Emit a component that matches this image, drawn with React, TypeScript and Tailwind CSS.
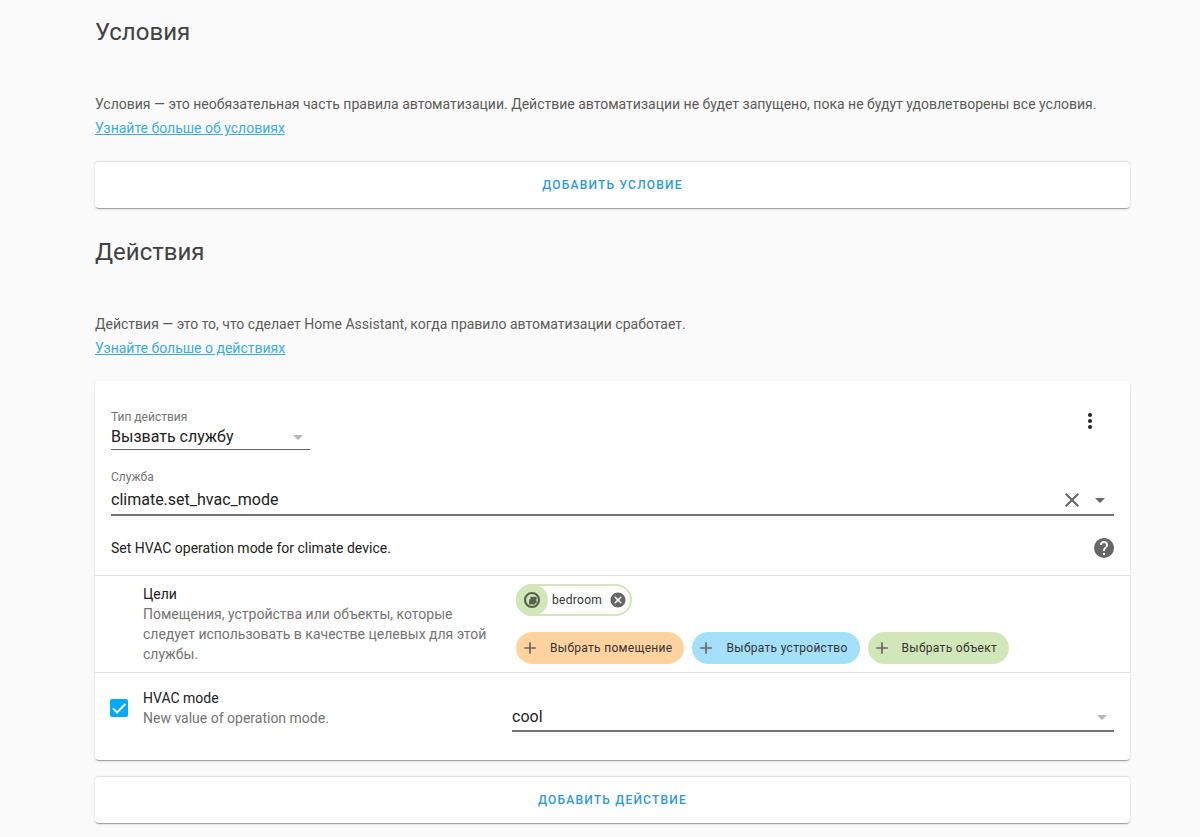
import { useState } from 'react';
import type { ReactNode } from 'react';

function Icon({ path, className }: { path: string; className?: string }) {
  return (
    <svg viewBox="0 0 24 24" fill="currentColor" aria-hidden="true" className={className}>
      <path d={path} />
    </svg>
  );
}

const icons = {
  menuDown: 'M7,10L12,15L17,10H7Z',
  dotsVertical:
    'M12,16A2,2 0 0,1 14,18A2,2 0 0,1 12,20A2,2 0 0,1 10,18A2,2 0 0,1 12,16M12,10A2,2 0 0,1 14,12A2,2 0 0,1 12,14A2,2 0 0,1 10,12A2,2 0 0,1 12,10M12,4A2,2 0 0,1 14,6A2,2 0 0,1 12,8A2,2 0 0,1 10,6A2,2 0 0,1 12,4Z',
  close:
    'M19,6.41L17.59,5L12,10.59L6.41,5L5,6.41L10.59,12L5,17.59L6.41,19L12,13.41L17.59,19L19,17.59L13.41,12L19,6.41Z',
  closeCircle:
    'M12,2C17.53,2 22,6.47 22,12C22,17.53 17.53,22 12,22C6.47,22 2,17.53 2,12C2,6.47 6.47,2 12,2M15.59,7L12,10.59L8.41,7L7,8.41L10.59,12L7,15.59L8.41,17L12,13.41L15.59,17L17,15.59L13.41,12L17,8.41L15.59,7Z',
  helpCircle:
    'M15.07,11.25L14.17,12.17C13.45,12.89 13,13.5 13,15H11V14.5C11,13.39 11.45,12.39 12.17,11.67L13.41,10.41C13.78,10.05 14,9.55 14,9C14,7.89 13.1,7 12,7A2,2 0 0,0 10,9H8A4,4 0 0,1 12,5A4,4 0 0,1 16,9C16,9.88 15.64,10.67 15.07,11.25M13,19H11V17H13M12,2A10,10 0 0,0 2,12A10,10 0 0,0 12,22A10,10 0 0,0 22,12C22,6.47 17.5,2 12,2Z',
  plus: 'M19,13H13V19H11V13H5V11H11V5H13V11H19V13Z',
};

const cardStyle =
  'rounded-sm bg-white shadow-[0_2px_1px_-1px_rgba(0,0,0,0.2),0_1px_1px_0_rgba(0,0,0,0.14),0_1px_3px_0_rgba(0,0,0,0.12)]';

interface SectionProps {
  title: string;
  text: string;
  linkText: string;
  children: ReactNode;
}

function Section({ title, text, linkText, children }: SectionProps) {
  return (
    <section>
      <h2 className="text-2xl leading-8 text-[#414141]">{title}</h2>
      <div className="mt-11 mb-[21px] text-sm leading-6 text-[#5a5a5a]">
        <p>{text}</p>
        <a href="#" className="text-[#39addf] underline">
          {linkText}
        </a>
      </div>
      {children}
    </section>
  );
}

function AddButton({ label }: { label: string }) {
  return (
    <button
      type="button"
      className={`h-[47px] w-full border-t border-[#e0e0e0] text-xs font-medium tracking-widest text-[#2b9bd6] uppercase ${cardStyle}`}
    >
      {label}
    </button>
  );
}

function TargetButton({ label, color }: { label: string; color: string }) {
  return (
    <button
      type="button"
      className={`flex h-8 items-center rounded-full pr-3 pl-1 text-xs tracking-wide text-[#333] ${color}`}
    >
      <Icon path={icons.plus} className="mr-2.5 size-5 text-[#666]" />
      {label}
    </button>
  );
}

export default function App() {
  const [service, setService] = useState('climate.set_hvac_mode');
  const [enabled, setEnabled] = useState(true);

  return (
    <main className="min-h-screen bg-[#fafafa] pt-4 pr-[70px] pb-3 pl-[95px] font-[Roboto,sans-serif]">
      <div className="flex flex-col gap-7">
        <Section
          title="Условия"
          text="Условия — это необязательная часть правила автоматизации. Действие автоматизации не будет запущено, пока не будут удовлетворены все условия."
          linkText="Узнайте больше об условиях"
        >
          <AddButton label="Добавить условие" />
        </Section>

        <Section
          title="Действия"
          text="Действия — это то, что сделает Home Assistant, когда правило автоматизации сработает."
          linkText="Узнайте больше о действиях"
        >
          <div className={cardStyle}>
            <div className="px-4 pt-7">
              <div className="flex items-start justify-between">
                <div className="w-[199px]">
                  <label htmlFor="action-type" className="block text-xs leading-4 text-[#737373]">
                    Тип действия
                  </label>
                  <div className="grid items-center border-b border-[#616161]">
                    <select
                      id="action-type"
                      className="col-start-1 row-start-1 h-6 appearance-none bg-transparent text-base leading-6 text-[#212121] outline-none"
                    >
                      <option>Вызвать службу</option>
                    </select>
                    <Icon
                      path={icons.menuDown}
                      className="pointer-events-none col-start-1 row-start-1 size-6 justify-self-end text-[#b5b5b5]"
                    />
                  </div>
                </div>
                <button type="button" aria-label="Меню" className="mr-3 text-[#212121]">
                  <Icon path={icons.dotsVertical} className="size-6" />
                </button>
              </div>

              <label htmlFor="service" className="mt-[19px] block text-xs leading-4 text-[#737373]">
                Служба
              </label>
              <div className="flex h-[31px] items-center border-b-2 border-[#737373]">
                <input
                  id="service"
                  value={service}
                  onChange={(e) => setService(e.target.value)}
                  className="min-w-0 flex-1 bg-transparent text-base leading-6 text-[#212121] outline-none"
                />
                <button type="button" aria-label="Очистить" className="mr-1 text-[#666]" onClick={() => setService('')}>
                  <Icon path={icons.close} className="size-6" />
                </button>
                <button type="button" aria-label="Открыть список" className="mr-0.5 text-[#666]">
                  <Icon path={icons.menuDown} className="size-6" />
                </button>
              </div>

              <div className="flex items-center justify-between pt-5 pb-[15px]">
                <p className="text-sm leading-5 text-[#212121]">Set HVAC operation mode for climate device.</p>
                <button type="button" aria-label="Справка" className="-mr-0.5 text-[#666]">
                  <Icon path={icons.helpCircle} className="size-6" />
                </button>
              </div>
            </div>

            <div className="grid grid-cols-[369px_1fr] border-t border-[#e0e0e0] py-2 pr-4 pl-12">
              <div className="pr-4 text-sm leading-5">
                <h3 className="text-[#212121]">Цели</h3>
                <p className="text-[#737373]">
                  Помещения, устройства или объекты, которые следует использовать в качестве целевых для этой службы.
                </p>
              </div>
              <div className="pl-1">
                <div className="flex h-8 w-fit items-center rounded-full border-2 border-[#d2e7b9] pr-[3px]">
                  <span className="-ml-0.5 flex size-8 items-center justify-center rounded-full bg-[#d2e7b9]">
                    <svg viewBox="0 0 24 24" aria-hidden="true" className="size-5 text-[#56634a]">
                      <circle cx="12" cy="12" r="8.4" fill="none" stroke="currentColor" strokeWidth="2.6" />
                      <path d="M8.5 17.5V11H10V8H17.5V16H15.5V17.5Z" fill="currentColor" />
                    </svg>
                  </span>
                  <span className="ml-1 text-xs tracking-wide text-[#333]">bedroom</span>
                  <button type="button" aria-label="Удалить bedroom" className="ml-[7px] text-[#666]">
                    <Icon path={icons.closeCircle} className="size-[18px]" />
                  </button>
                </div>
                <div className="mt-4 flex flex-wrap gap-2">
                  <TargetButton label="Выбрать помещение" color="bg-[#fed3a0]" />
                  <TargetButton label="Выбрать устройство" color="bg-[#a5e0fb]" />
                  <TargetButton label="Выбрать объект" color="bg-[#d2e7b9]" />
                </div>
              </div>
            </div>

            <div className="grid grid-cols-[32px_369px_1fr] border-t border-[#e0e0e0] pt-[15px] pr-4 pb-7 pl-[15px]">
              <div className="mt-[11px] grid size-[18px] items-center self-start">
                <input
                  id="hvac-enabled"
                  type="checkbox"
                  checked={enabled}
                  onChange={(e) => setEnabled(e.target.checked)}
                  className="peer col-start-1 row-start-1 size-[18px] appearance-none rounded-xs border-2 border-[#737373] checked:border-[#03a9f4] checked:bg-[#03a9f4]"
                />
                <svg
                  viewBox="0 0 24 24"
                  aria-hidden="true"
                  className="pointer-events-none col-start-1 row-start-1 hidden size-[18px] text-white peer-checked:block"
                >
                  <path d="M4 12.5L9.5 18L20.5 6.5" fill="none" stroke="currentColor" strokeWidth="2.6" />
                </svg>
              </div>
              <label htmlFor="hvac-enabled" className="pl-px text-sm leading-5">
                <span className="block text-[#212121]">HVAC mode</span>
                <span className="block text-[#737373]">New value of operation mode.</span>
              </label>
              <div className="mt-4 ml-px grid items-center self-start border-b-2 border-[#737373]">
                <select
                  aria-label="HVAC mode"
                  className="col-start-1 row-start-1 h-[26px] appearance-none bg-transparent text-base leading-6 text-[#212121] outline-none"
                >
                  <option>cool</option>
                </select>
                <Icon
                  path={icons.menuDown}
                  className="pointer-events-none col-start-1 row-start-1 size-6 justify-self-end text-[#b5b5b5]"
                />
              </div>
            </div>
          </div>
        </Section>
      </div>

      <div className="mt-4">
        <AddButton label="Добавить действие" />
      </div>
    </main>
  );
}
